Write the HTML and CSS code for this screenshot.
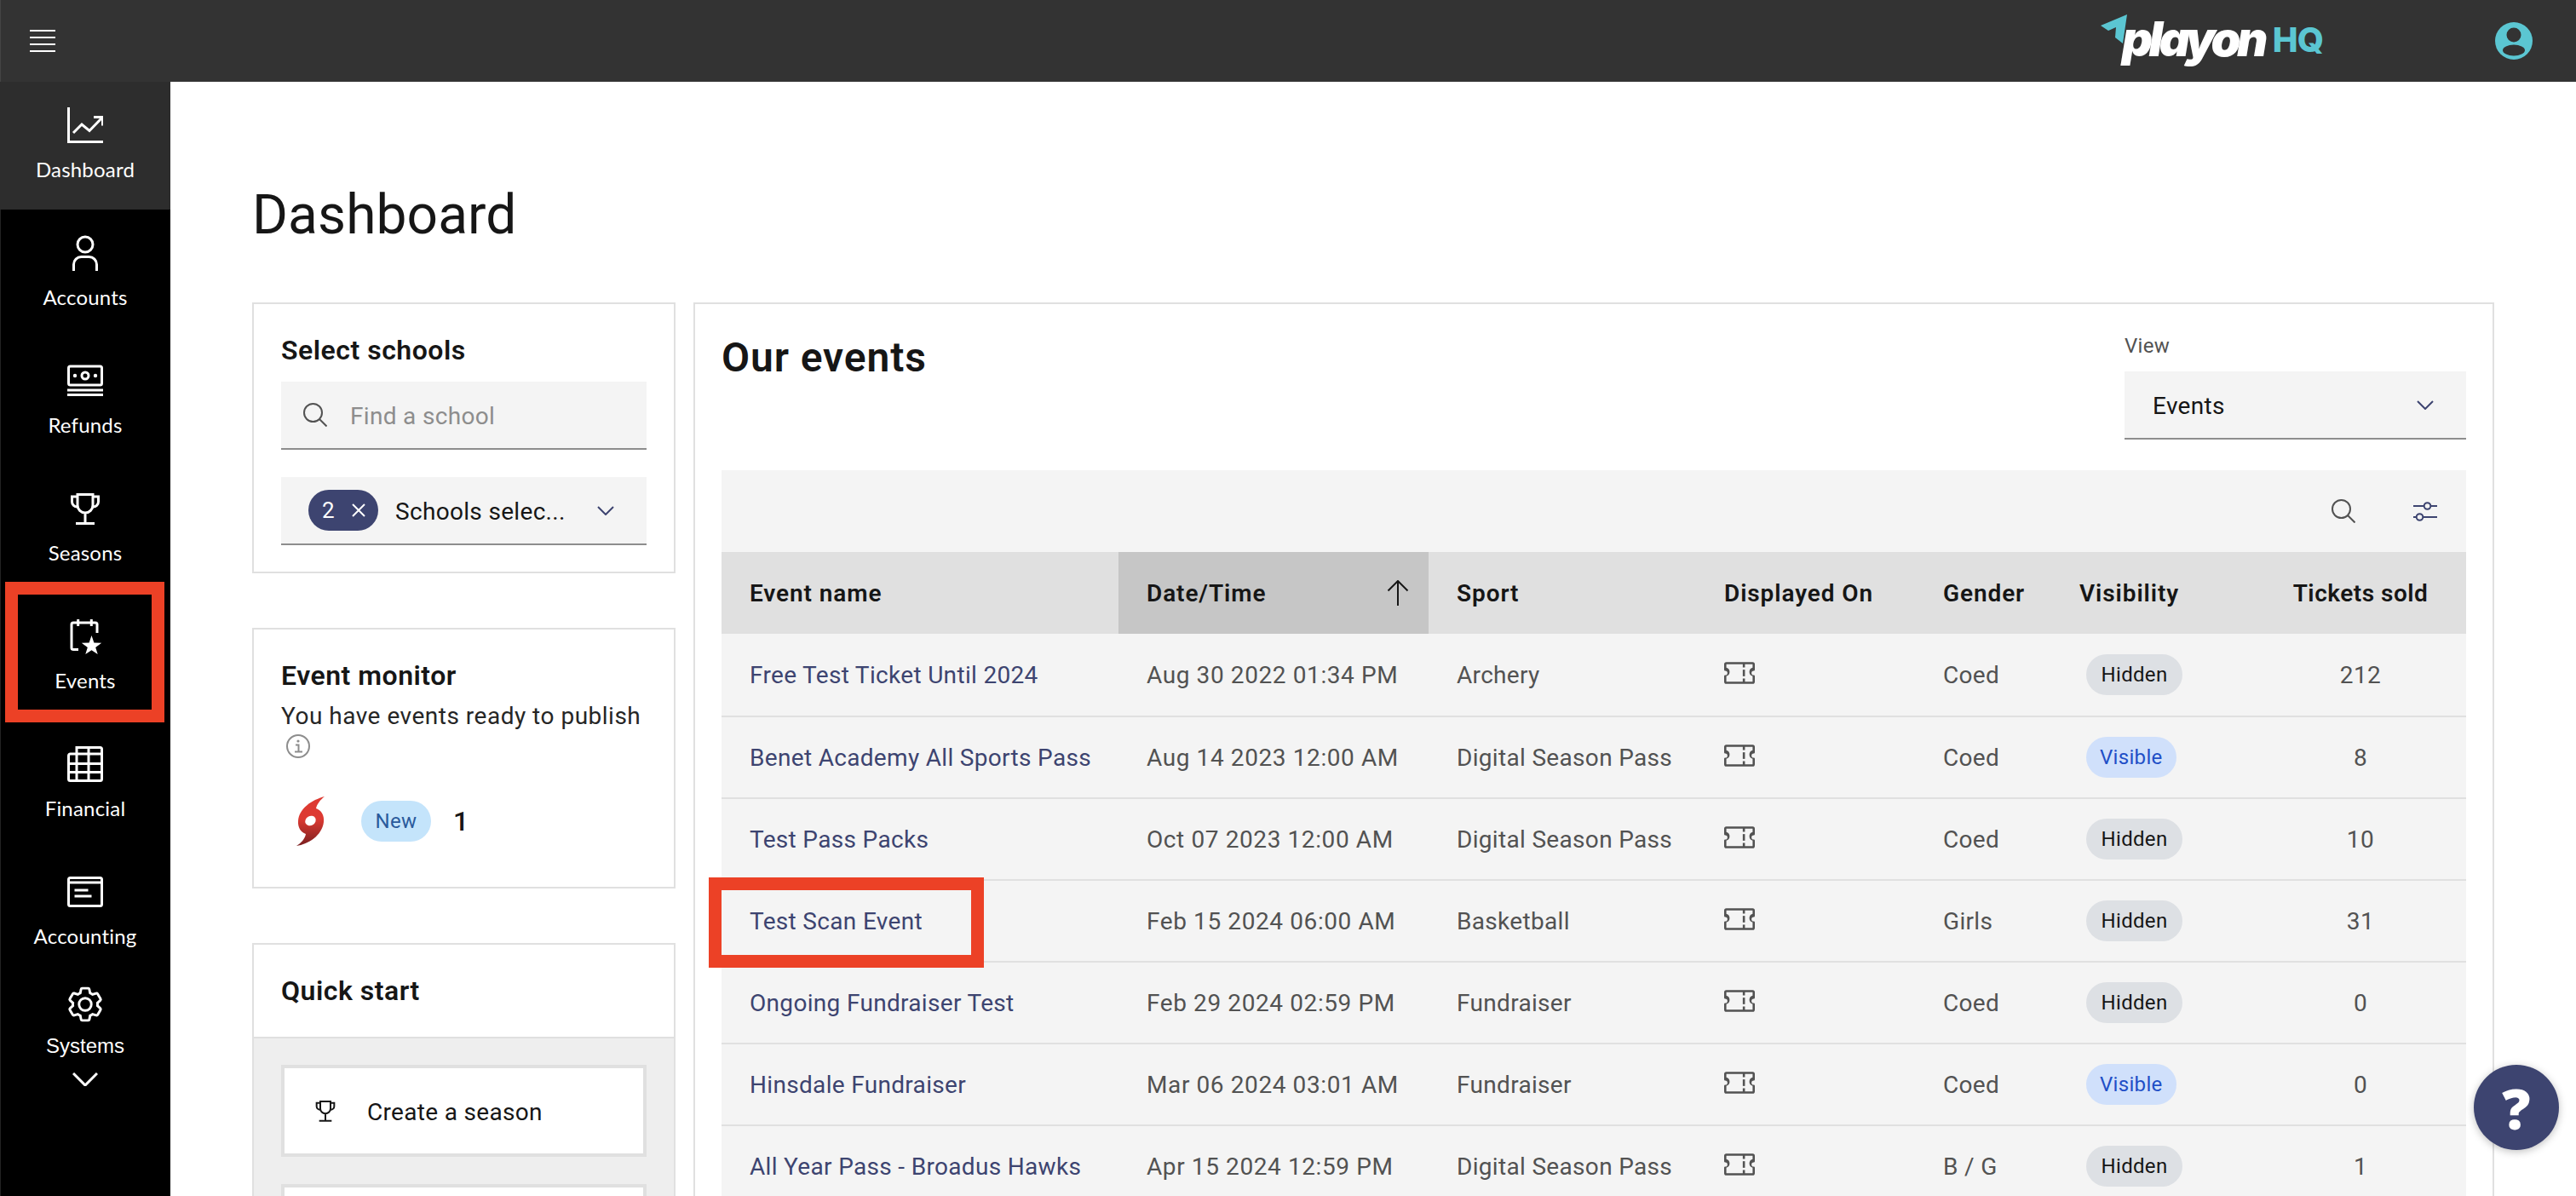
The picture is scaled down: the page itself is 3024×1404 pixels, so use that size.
FILE: index.html
```html
<!DOCTYPE html>
<html lang="en">
<head>
  <meta charset="UTF-8">
  <title>Dashboard - PlayOn HQ</title>
  <link rel="stylesheet" href="styles.css">
</head>
<body>
  <svg class="sprite" aria-hidden="true">
    <symbol id="ticket" viewBox="2 6 28 20">
      <path d="M29,14a1,1,0,0,0,1-1V8a2,2,0,0,0-2-2H4A2,2,0,0,0,2,8v5a1,1,0,0,0,1,1,2,2,0,0,1,0,4,1,1,0,0,0-1,1v5a2,2,0,0,0,2,2H28a2,2,0,0,0,2-2V19a1,1,0,0,0-1-1,2,2,0,0,1,0-4Zm-1-2.87a4,4,0,0,0,0,7.74V24H21V21H19v3H4V18.87a4,4,0,0,0,0-7.74V8H19v3h2V8h7Z"/>
      <rect x="19" y="13" width="2" height="6"/>
    </symbol>
    <symbol id="search" viewBox="0 0 28 28">
      <circle cx="11.5" cy="11.5" r="10.5" fill="none" stroke="currentColor" stroke-width="2"/>
      <path d="M19 19l8.5 8.5" fill="none" stroke="currentColor" stroke-width="2"/>
    </symbol>
    <symbol id="chevron" viewBox="0 0 20 11">
      <path d="M1 1l9 9 9-9" fill="none" stroke="currentColor" stroke-width="2"/>
    </symbol>
    <symbol id="trophy" viewBox="0 0 42 42">
      <path d="M12 4.5H30V17a9 9 0 0 1-18 0ZM12 7H5.5v6a6 6 0 0 0 6.500 6M30 7h6.500v6a6 6 0 0 1-6.500 6M21 26V38M10 38.500H32" fill="none" stroke="currentColor" stroke-width="3"/>
    </symbol>
  </svg>

  <header class="topbar">
    <div class="menu-btn"><span></span><span></span><span></span><span></span></div>
    <div class="logo">
      <svg class="logo-arrow" width="31" height="36" viewBox="0 0 31 36"><polygon points="31,0 0,13 9,19 18,15 17,27 26,34"/></svg>
      <span class="logo-name">playon</span>
      <span class="logo-hq">HQ</span>
    </div>
    <svg class="avatar" width="44" height="44" viewBox="0 0 44 44">
      <circle cx="22" cy="22" r="22" fill="#5bc6d2"/>
      <circle cx="22" cy="15" r="8.500" fill="#333"/>
      <ellipse cx="22" cy="33" rx="13" ry="6.500" fill="#333"/>
    </svg>
  </header>

  <div class="shell">
    <nav class="sidebar">
      <a class="nav-item active">
        <svg class="nav-icon" viewBox="0 0 42 42"><path d="M1.500 0V40.500H42M7 30l10-10 9 7.500L40.500 12.500M31 11.500H41.500V21.500"/></svg>
        <span>Dashboard</span>
      </a>
      <a class="nav-item">
        <svg class="nav-icon" viewBox="0 0 42 42"><circle cx="21" cy="11" r="9"/><path d="M7.500 42V34.500A9 9 0 0 1 16.500 25.500H25.500A9 9 0 0 1 34.500 34.500V42"/></svg>
        <span>Accounts</span>
      </a>
      <a class="nav-item">
        <svg class="nav-icon" viewBox="0 0 42 42"><rect x="1.500" y="4" width="39" height="22" rx="2"/><circle cx="21" cy="15" r="4"/><circle class="solid" cx="9" cy="15" r="2.200"/><circle class="solid" cx="33" cy="15" r="2.200"/><path d="M0 32H42M0 37.500H42"/></svg>
        <span>Refunds</span>
      </a>
      <a class="nav-item">
        <svg class="nav-icon"><use href="#trophy"/></svg>
        <span>Seasons</span>
      </a>
      <a class="nav-item">
        <svg class="nav-icon" viewBox="0 0 42 42"><path d="M13 36.500H7a2 2 0 0 1-2-2V7a2 2 0 0 1 2-2H33a2 2 0 0 1 2 2V17M12.700 1V9M28.300 1V9"/><polygon class="solid" points="28.500,20 31.400,28.500 40.200,28.700 33.200,34 35.700,42 28.500,37.300 21.300,42 23.800,34 16.800,28.700 25.600,28.500"/></svg>
        <span>Events</span>
      </a>
      <a class="nav-item">
        <svg class="nav-icon" viewBox="0 0 42 42"><path d="M11 1.500H38.500a2 2 0 0 1 2 2V38.500a2 2 0 0 1-2 2H3.500a2 2 0 0 1-2-2V11a2 2 0 0 1 2-2H11ZM1.500 20.500H40.500M1.500 30.500H40.500M11 9H40.500M11 9V40.500M25 1.500V40.500"/></svg>
        <span>Financial</span>
      </a>
      <a class="nav-item">
        <svg class="nav-icon" viewBox="0 0 42 42"><rect x="1.500" y="4.500" width="39" height="33" rx="2"/><path d="M1.500 10H40.500M8.500 19H24.500M8.500 26H28.500"/></svg>
        <span>Accounting</span>
      </a>
      <a class="nav-item nav-last">
        <svg class="nav-icon gear" viewBox="1.500 1.500 29 29">
          <path d="M27,16.760c0-.25,0-.5,0-.76s0-.51,0-.77l1.920-1.680A2,2,0,0,0,29.300,11L26.940,7a2,2,0,0,0-1.730-1,2,2,0,0,0-.64.1l-2.430.82a11.350,11.350,0,0,0-1.310-.75l-.51-2.520a2,2,0,0,0-2-1.610H13.640a2,2,0,0,0-2,1.610l-.51,2.520a11.480,11.480,0,0,0-1.320.75L7.430,6A2,2,0,0,0,6.790,6,2,2,0,0,0,5.060,7L2.700,11a2,2,0,0,0,.41,2.510L5,15.240c0,.25,0,.5,0,.76s0,.51,0,.77L3.110,18.450A2,2,0,0,0,2.700,21L5.060,25a2,2,0,0,0,1.730,1,2,2,0,0,0,.64-.1l2.430-.82a11.350,11.350,0,0,0,1.310.75l.51,2.520a2,2,0,0,0,2,1.610h4.720a2,2,0,0,0,2-1.610l.51-2.520a11.480,11.480,0,0,0,1.320-.75l2.420.82a2,2,0,0,0,.64.1,2,2,0,0,0,1.730-1L29.300,21a2,2,0,0,0-.41-2.510ZM25.210,24l-3.430-1.160a8.860,8.860,0,0,1-2.710,1.570L18.360,28H13.640l-.71-3.550a9.360,9.360,0,0,1-2.700-1.570L6.790,24,4.430,20l2.720-2.400a8.900,8.900,0,0,1,0-3.130L4.430,12,6.790,8l3.430,1.160a8.860,8.860,0,0,1,2.710-1.570L13.640,4h4.720l.71,3.550a9.360,9.360,0,0,1,2.700,1.570L25.210,8l2.360,4-2.720,2.400a8.900,8.900,0,0,1,0,3.130L27.570,20Z"/>
          <path d="M16,22a6,6,0,1,1,6-6A5.940,5.940,0,0,1,16,22Zm0-10a3.910,3.910,0,0,0-4,4,3.910,3.910,0,0,0,4,4,3.910,3.910,0,0,0,4-4A3.910,3.910,0,0,0,16,12Z"/>
        </svg>
        <span>Systems</span>
        <svg class="nav-more" width="30" height="16" viewBox="0 0 30 16"><path d="M1 1l14 14L29 1"/></svg>
      </a>
    </nav>

    <main class="content">
      <h1>Dashboard</h1>
      <div class="columns">
        <div class="left-col">
          <section class="card pad schools">
            <h2 class="card-title">Select schools</h2>
            <div class="field find">
              <svg class="field-search" width="28" height="28"><use href="#search"/></svg>
              <span class="placeholder">Find a school</span>
            </div>
            <div class="field multi">
              <span class="count-tag">2 <svg width="16" height="16" viewBox="0 0 16 16"><path d="M1 1l14 14M15 1L1 15"/></svg></span>
              <span class="multi-text">Schools selec...</span>
              <svg class="chev" width="20" height="11"><use href="#chevron"/></svg>
            </div>
          </section>

          <section class="card pad monitor">
            <h2 class="card-title">Event monitor</h2>
            <p class="monitor-text">You have events ready to publish</p>
            <svg class="info" width="28" height="28" viewBox="0 0 28 28"><circle cx="14" cy="14" r="13"/><path d="M11 12.500h3.500v8M10 20.500h9"/><circle class="dot" cx="14" cy="8" r="1.600"/></svg>
            <div class="monitor-row">
              <svg class="storm" width="33" height="58" viewBox="0 0 33 58">
                <defs>
                  <linearGradient id="stormFill" x1="0" y1="0" x2="0" y2="1">
                    <stop offset="0.45" stop-color="#dd3a32"/>
                    <stop offset="1" stop-color="#7a1f20"/>
                  </linearGradient>
                </defs>
                <path fill="url(#stormFill)" d="M33 0C18 4 3 14 2 29C1.500 36 5 42 11 44C10 50 5 55 0 58C14 56 30 46 32 30C33 22 29 16 23 14C24 9 28 4 33 0Z"/>
                <ellipse cx="16.500" cy="28.500" rx="6.500" ry="5.500" fill="#fff" transform="rotate(-30 16.500 28.500)"/>
              </svg>
              <span class="pill new">New</span>
              <span class="monitor-count">1</span>
            </div>
          </section>

          <section class="card quick">
            <h2 class="card-title quick-head">Quick start</h2>
            <div class="quick-body">
              <a class="quick-btn">
                <svg width="28" height="28"><use href="#trophy"/></svg>
                <span>Create a season</span>
              </a>
              <a class="quick-btn"></a>
            </div>
          </section>
        </div>

        <section class="card events">
          <div class="events-head">
            <h2 class="events-title">Our events</h2>
            <div class="view">
              <label class="view-label">View</label>
              <div class="field view-select">
                <span>Events</span>
                <svg class="chev" width="20" height="11"><use href="#chevron"/></svg>
              </div>
            </div>
          </div>

          <div class="toolbar">
            <div class="tool-btn"><svg class="tool-search" width="28" height="28"><use href="#search"/></svg></div>
            <div class="tool-btn">
              <svg class="tool-filter" width="28" height="23" viewBox="0 0 28 23"><path d="M0 5H13M20 5H28M0 18H4M11 18H28"/><circle cx="16.500" cy="5" r="3.800"/><circle cx="7.500" cy="18" r="3.800"/></svg>
            </div>
          </div>

          <table class="event-table">
            <colgroup>
              <col class="c-name"><col class="c-date"><col class="c-sport"><col class="c-shown"><col class="c-gender"><col class="c-vis"><col class="c-sold">
            </colgroup>
            <thead>
              <tr>
                <th>Event name</th>
                <th class="sorted">
                  <div class="sort-cell">Date/Time
                    <svg width="26" height="30" viewBox="0 0 26 30"><path d="M13 30V1M1.500 12.500L13 1l11.500 11.500"/></svg>
                  </div>
                </th>
                <th>Sport</th>
                <th>Displayed On</th>
                <th>Gender</th>
                <th>Visibility</th>
                <th class="center">Tickets sold</th>
              </tr>
            </thead>
            <tbody>
              <tr>
                <td><a class="event-link">Free Test Ticket Until 2024</a></td>
                <td class="date">Aug 30 2022 01:34 PM</td>
                <td>Archery</td>
                <td><svg class="ticket" width="36" height="26"><use href="#ticket"/></svg></td>
                <td>Coed</td>
                <td><span class="pill hidden">Hidden</span></td>
                <td class="center">212</td>
              </tr>
              <tr>
                <td><a class="event-link">Benet Academy All Sports Pass</a></td>
                <td class="date">Aug 14 2023 12:00 AM</td>
                <td>Digital Season Pass</td>
                <td><svg class="ticket" width="36" height="26"><use href="#ticket"/></svg></td>
                <td>Coed</td>
                <td><span class="pill visible">Visible</span></td>
                <td class="center">8</td>
              </tr>
              <tr>
                <td><a class="event-link">Test Pass Packs</a></td>
                <td class="date">Oct 07 2023 12:00 AM</td>
                <td>Digital Season Pass</td>
                <td><svg class="ticket" width="36" height="26"><use href="#ticket"/></svg></td>
                <td>Coed</td>
                <td><span class="pill hidden">Hidden</span></td>
                <td class="center">10</td>
              </tr>
              <tr>
                <td><a class="event-link">Test Scan Event</a></td>
                <td class="date">Feb 15 2024 06:00 AM</td>
                <td>Basketball</td>
                <td><svg class="ticket" width="36" height="26"><use href="#ticket"/></svg></td>
                <td>Girls</td>
                <td><span class="pill hidden">Hidden</span></td>
                <td class="center">31</td>
              </tr>
              <tr>
                <td><a class="event-link">Ongoing Fundraiser Test</a></td>
                <td class="date">Feb 29 2024 02:59 PM</td>
                <td>Fundraiser</td>
                <td><svg class="ticket" width="36" height="26"><use href="#ticket"/></svg></td>
                <td>Coed</td>
                <td><span class="pill hidden">Hidden</span></td>
                <td class="center">0</td>
              </tr>
              <tr>
                <td><a class="event-link">Hinsdale Fundraiser</a></td>
                <td class="date">Mar 06 2024 03:01 AM</td>
                <td>Fundraiser</td>
                <td><svg class="ticket" width="36" height="26"><use href="#ticket"/></svg></td>
                <td>Coed</td>
                <td><span class="pill visible">Visible</span></td>
                <td class="center">0</td>
              </tr>
              <tr>
                <td><a class="event-link">All Year Pass - Broadus Hawks</a></td>
                <td class="date">Apr 15 2024 12:59 PM</td>
                <td>Digital Season Pass</td>
                <td><svg class="ticket" width="36" height="26"><use href="#ticket"/></svg></td>
                <td>B / G</td>
                <td><span class="pill hidden">Hidden</span></td>
                <td class="center">1</td>
              </tr>
            </tbody>
          </table>
        </section>
      </div>
    </main>
  </div>

  <!-- red annotation boxes drawn over the screenshot -->
  <div class="mark mark-nav"></div>
  <div class="mark mark-row"></div>

  <button class="help-btn">?</button>
</body>
</html>
```

FILE: styles.css
```css
* {
  box-sizing: border-box;
}
html, body {
  height: 100%;
}
body {
  margin: 0;
  overflow: hidden;
  position: relative;
  background: #fff;
  color: #161616;
  font-family: Roboto, "Noto Sans", sans-serif;
  font-size: 28px;
  letter-spacing: 0.32px;
}
.sprite {
  display: none;
}

/* top bar */
.topbar {
  height: 96px;
  background: #333;
  display: flex;
  align-items: center;
  padding: 0 51px 0 35px;
  box-shadow: inset 1px 0 0 #444;
}
.menu-btn {
  width: 30px;
  display: flex;
  flex-direction: column;
  gap: 6px;
  margin-right: auto;
}
.menu-btn span {
  height: 2px;
  background: #fff;
}
.logo {
  display: flex;
  align-items: center;
  height: 96px;
  margin-right: 202px;
}
.logo-arrow {
  fill: #5bc6d2;
  margin-top: -26px;
}
.logo-name {
  font-family: Inter, sans-serif;
  font-size: 56px;
  font-weight: 900;
  font-style: italic;
  letter-spacing: -4.5px;
  color: #fff;
  margin-left: -6px;
  margin-top: -4px;
}
.logo-hq {
  font-family: Inter, sans-serif;
  font-size: 40px;
  font-weight: 800;
  letter-spacing: -1px;
  color: #5bc6d2;
  margin-left: 10px;
  margin-top: -4px;
}

/* sidebar */
.shell {
  display: flex;
  height: calc(100vh - 96px);
}
.sidebar {
  width: 200px;
  flex-shrink: 0;
  background: #000;
  box-shadow: inset 1px 0 0 #222;
}
.nav-item {
  height: 150px;
  padding-top: 30px;
  display: flex;
  flex-direction: column;
  align-items: center;
  gap: 15px;
  color: #fff;
  font-family: Lato, sans-serif;
  font-size: 24px;
  line-height: 32px;
  letter-spacing: 0.2px;
}
.nav-item.active {
  background: #2d2d2d;
}
.nav-last {
  padding-top: 12px;
  gap: 12px;
  font-family: "Liberation Sans", sans-serif;
  letter-spacing: 0;
}
.nav-icon {
  width: 42px;
  height: 42px;
  fill: none;
  stroke: #fff;
  stroke-width: 3;
  color: #fff;
}
.nav-icon .solid {
  fill: #fff;
  stroke: none;
}
.nav-icon.gear {
  fill: #fff;
  stroke: none;
}
.nav-more {
  fill: none;
  stroke: #fff;
  stroke-width: 3;
  margin-top: 3px;
}

/* main content */
.content {
  flex: 1;
  padding: 117px 96px 0;
  min-width: 0;
}
h1 {
  margin: 0 0 62px;
  font-size: 64px;
  font-weight: 400;
  line-height: 80px;
  letter-spacing: 0.1px;
}
.columns {
  display: grid;
  grid-template-columns: 497px 1fr;
  gap: 21px;
  align-items: start;
}
.left-col {
  display: flex;
  flex-direction: column;
  gap: 64px;
}
.card {
  border: 2px solid #e0e0e0;
  background: #fff;
}
.card.pad {
  padding: 32px;
}
.card.schools {
  padding-bottom: 31px;
}
.card-title {
  margin: 0;
  font-size: 32px;
  font-weight: 600;
  line-height: 44px;
  letter-spacing: 0.5px;
}

/* form fields */
.field {
  height: 80px;
  background: #f4f4f4;
  border-bottom: 2px solid #8d8d8d;
  display: flex;
  align-items: center;
}
.field > span:not(.count-tag) {
  padding-top: 3px;
}
.find {
  margin-top: 15px;
  padding-left: 26px;
  color: #525252;
}
.field-search {
  margin-right: 27px;
}
.placeholder {
  color: #8d8d8d;
}
.multi {
  margin-top: 32px;
  padding-left: 32px;
}
.count-tag {
  width: 82px;
  height: 48px;
  border-radius: 24px;
  background: #3d4470;
  color: #fff;
  font-size: 26px;
  display: flex;
  align-items: center;
  padding-left: 16px;
  gap: 20px;
  flex-shrink: 0;
}
.count-tag svg {
  fill: none;
  stroke: #fff;
  stroke-width: 2;
}
.multi-text {
  margin-left: 20px;
  white-space: nowrap;
}
.chev {
  color: #3d4470;
  margin-left: auto;
  margin-right: 38px;
  flex-shrink: 0;
}

/* event monitor */
.card.monitor {
  padding-bottom: 48px;
}
.monitor-text {
  margin: 6px 0 0;
  line-height: 40px;
  color: #262626;
  white-space: nowrap;
  letter-spacing: 0.5px;
}
.info {
  display: block;
  margin: 1px 0 0 6px;
  fill: none;
  stroke: #8d8d8d;
  stroke-width: 2;
}
.info .dot {
  fill: #8d8d8d;
  stroke: none;
}
.monitor-row {
  display: flex;
  align-items: center;
  margin-top: 45px;
  padding-left: 18px;
}
.monitor-count {
  margin-left: 26px;
  font-size: 32px;
  font-weight: 500;
}
.pill {
  display: inline-flex;
  align-items: center;
  height: 48px;
  padding: 0 16px;
  border-radius: 24px;
  font-size: 24px;
  vertical-align: middle;
}
.pill.new {
  margin-left: 43px;
  width: 82px;
  justify-content: center;
  padding: 0;
  background: #c4e4fb;
  color: #2a5a9c;
}
.pill.hidden {
  min-width: 113px;
  justify-content: center;
  background: #dde0e4;
  color: #161616;
}
.pill.visible {
  background: #d0e0fb;
  color: #1f4fc7;
}

/* quick start */
.quick-head {
  height: 110px;
  padding: 32px 32px 0;
  border-bottom: 2px solid #e0e0e0;
}
.quick-body {
  background: #eee;
  padding: 31px 32px 32px;
  display: flex;
  flex-direction: column;
  gap: 32px;
}
.quick-btn {
  height: 108px;
  border: 4px solid #e0e0e0;
  background: #fff;
  display: flex;
  align-items: center;
  padding-left: 34px;
  gap: 35px;
}
.quick-btn span {
  padding-top: 2px;
}

/* events panel */
.events {
  padding: 31px 31px 0;
}
.events-head {
  display: flex;
  justify-content: space-between;
  margin-bottom: 36px;
}
.events-title {
  margin: 4px 0 0;
  font-size: 48px;
  font-weight: 600;
  line-height: 56px;
  letter-spacing: 0.9px;
}
.view {
  width: 401px;
}
.view-label {
  display: block;
  font-size: 24px;
  line-height: 32px;
  padding-top: 2px;
  color: #525252;
  margin-bottom: 14px;
}
.view-select {
  padding-left: 33px;
}
.toolbar {
  height: 96px;
  background: #f4f4f4;
  display: flex;
  justify-content: flex-end;
}
.tool-btn {
  width: 96px;
  height: 96px;
  display: flex;
  align-items: center;
  justify-content: center;
}
.tool-search {
  color: #525252;
}
.tool-filter {
  fill: none;
  stroke: #3d4470;
  stroke-width: 2;
}

/* table */
.event-table {
  width: 100%;
  table-layout: fixed;
  border-collapse: separate;
  border-spacing: 0;
}
.c-name { width: 466px; }
.c-date { width: 364px; }
.c-sport { width: 314px; }
.c-shown { width: 257px; }
.c-gender { width: 160px; }
.c-vis { width: 239px; }
.c-sold { width: 248px; }
.event-table th {
  height: 96px;
  padding: 0 0 0 33px;
  background: #e0e0e0;
  font-weight: 600;
  letter-spacing: 0.9px;
  text-align: left;
  white-space: nowrap;
}
.event-table th.sorted {
  background: #c6c6c6;
  padding-right: 23px;
}
.sort-cell {
  display: flex;
  align-items: center;
  justify-content: space-between;
}
.sort-cell svg {
  fill: none;
  stroke: #161616;
  stroke-width: 2;
}
.event-table td {
  height: 96px;
  padding: 0 0 0 33px;
  background: #f4f4f4;
  border-bottom: 2px solid #e0e0e0;
  color: #525252;
  white-space: nowrap;
}
.event-table tbody tr:first-child td {
  height: 98px;
}
.event-table td.date {
  letter-spacing: 0.6px;
}
.event-table .center,
.event-table th.center {
  text-align: center;
  padding: 0;
  letter-spacing: 0.5px;
}
.event-link {
  color: #3d4470;
}
.ticket {
  fill: #525252;
  display: block;
  margin-top: -4px;
}
td .pill {
  margin-left: 8px;
}

/* annotations and floating help */
.mark {
  position: absolute;
  border: 15px solid #ec4126;
}
.mark-nav {
  left: 6px;
  top: 683px;
  width: 187px;
  height: 165px;
}
.mark-row {
  left: 832px;
  top: 1030px;
  width: 323px;
  height: 106px;
}
.help-btn {
  position: fixed;
  left: 2904px;
  top: 1250px;
  width: 100px;
  height: 100px;
  border: 0;
  border-radius: 50%;
  background: #3d4470;
  color: #fff;
  font-family: "Open Sans", sans-serif;
  font-size: 66px;
  font-weight: 800;
  line-height: 100px;
  padding: 0;
  box-shadow: 0 2px 10px rgba(0, 0, 0, 0.25);
}
```
